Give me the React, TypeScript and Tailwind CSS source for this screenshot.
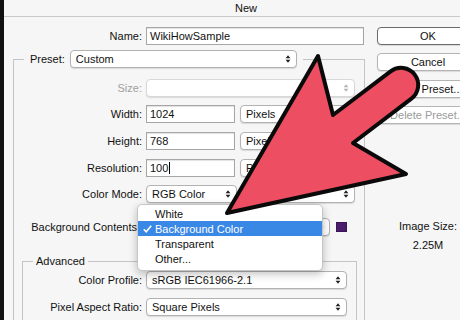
import React from "react";

const UpDown = ({ grey }: { grey?: boolean }) => (
  <svg width="6" height="10" viewBox="0 0 6 10" className="shrink-0">
    <path d="M0.6 4.2 L3 1.2 L5.4 4.2 Z M0.6 5.8 L3 8.8 L5.4 5.8 Z" fill={grey ? "#b5b5b5" : "#222"} />
  </svg>
);

const Select = ({
  className = "",
  children,
  disabled,
}: {
  className?: string;
  children?: React.ReactNode;
  disabled?: boolean;
}) => (
  <div
    className={`h-[18px] flex items-center justify-between rounded-[4px] border bg-white pl-[5px] pr-[5px] shadow-[0_1px_1px_rgba(0,0,0,0.12)] ${
      disabled ? "border-[#d8d8d8]" : "border-[#b2b2b2]"
    } ${className}`}
  >
    <span className="whitespace-nowrap leading-none">{children}</span>
    <UpDown grey={disabled} />
  </div>
);

const Input = ({ className = "", children }: { className?: string; children?: React.ReactNode }) => (
  <div
    className={`h-[18px] flex items-center border border-[#a6a6a6] bg-white px-[3px] shadow-[inset_0_1px_1px_rgba(0,0,0,0.12)] ${className}`}
  >
    {children}
  </div>
);

const Row = ({
  label,
  labelClass,
  className = "",
  grey,
  children,
}: {
  label: string;
  labelClass: string;
  className?: string;
  grey?: boolean;
  children?: React.ReactNode;
}) => (
  <div className={`flex items-center h-[18px] ${className}`}>
    <div className={`shrink-0 text-right whitespace-nowrap ${grey ? "text-[#a0a0a0]" : ""} ${labelClass}`}>
      {label}
    </div>
    {children}
  </div>
);

const Button = ({
  className = "",
  children,
  dark,
  grey,
}: {
  className?: string;
  children: React.ReactNode;
  dark?: boolean;
  grey?: boolean;
}) => (
  <div
    className={`w-full h-[18px] flex items-center justify-center rounded-[4px] border bg-white shadow-[0_1px_1px_rgba(0,0,0,0.12)] ${
      dark ? "border-[#6a6a6a]" : "border-[#b4b4b4]"
    } ${grey ? "text-[#9a9a9a]" : ""} ${className}`}
  >
    {children}
  </div>
);

export default function App() {
  return (
    <div className="w-[460px] h-[320px] relative overflow-hidden flex bg-[#f6f6f6] text-[11px] leading-[14px] text-[#111] font-['Liberation_Sans',Arial,sans-serif]">
      <div className="w-[4px] h-full bg-[#111] shrink-0" />
      <div className="flex-1 flex flex-col min-w-0">
        <div className="h-[17px] shrink-0 border-b border-[#c9c9c9] flex items-center pl-[231px]">New</div>
        <div className="flex flex-1 min-h-0">
          {/* left panel */}
          <div className="w-[373px] shrink-0 flex flex-col">
            <Row label="Name:" labelClass="w-[142px] pr-[4px]" className="mt-[10px]">
              <Input className="w-[218px]">WikiHowSample</Input>
            </Row>

            {/* Preset group */}
            <div className="mt-[14px] ml-[9px] w-[352px] border-l border-t border-r border-[#c4c4c4] pb-[30px] flex flex-col">
              <div className="-mt-[10px] ml-[10px] w-fit px-[6px] bg-[#f6f6f6] flex items-center h-[18px]">
                <span className="pr-[5px]">Preset:</span>
                <Select className="w-[227px]">Custom</Select>
              </div>
              <Row label="Size:" labelClass="w-[132px] pr-[4px]" grey className="mt-[11px]">
                <Select disabled className="w-[209px]" />
              </Row>
              <Row label="Width:" labelClass="w-[132px] pr-[4px]" className="mt-[8px]">
                <Input className="w-[89px]">1024</Input>
                <Select className="w-[115px] ml-[5px]">Pixels</Select>
              </Row>
              <Row label="Height:" labelClass="w-[132px] pr-[4px]" className="mt-[9px]">
                <Input className="w-[89px]">768</Input>
                <Select className="w-[115px] ml-[5px]">Pixels</Select>
              </Row>
              <Row label="Resolution:" labelClass="w-[132px] pr-[4px]" className="mt-[9px]">
                <Input className="w-[89px]">
                  100
                  <span className="inline-block w-[1px] h-[12px] bg-black ml-[1px]" />
                </Input>
                <Select className="w-[115px] ml-[5px]">Pixels/Inch</Select>
              </Row>
              <Row label="Color Mode:" labelClass="w-[132px] pr-[4px]" className="mt-[8px]">
                <Select className="w-[91px]">RGB Color</Select>
                <Select className="w-[114px] ml-[4px]">8 bit</Select>
              </Row>
              <Row label="Background Contents" labelClass="w-[132px] pr-[9px]" className="mt-[15px]">
                <Select className="w-[184px]" />
                <div className="ml-[6px] w-[11px] h-[10px] bg-[#4a1c6c] border border-[#3a1456]" />
              </Row>

              {/* Advanced group */}
              <div className="mt-[25px] ml-[8px] w-[335px] border-l border-t border-r border-[#c4c4c4] pb-[30px] flex flex-col">
                <div className="-mt-[8px] ml-[10px] w-fit px-[3px] h-[14px] bg-[#f6f6f6] flex items-center">Advanced</div>
                <Row label="Color Profile:" labelClass="w-[123px] pr-[4px]" className="mt-[3px]">
                  <Select className="w-[201px]">sRGB IEC61966-2.1</Select>
                </Row>
                <Row label="Pixel Aspect Ratio:" labelClass="w-[123px] pr-[4px]" className="mt-[9px]">
                  <Select className="w-[201px]">Square Pixels</Select>
                </Row>
              </div>
            </div>
          </div>

          {/* right column */}
          <div className="w-[102px] shrink-0 flex flex-col items-center">
            <Button dark className="mt-[10px]">OK</Button>
            <Button className="mt-[8px]">Cancel</Button>
            <Button className="mt-[9px]">Save Preset...</Button>
            <Button grey className="mt-[8px]">Delete Preset...</Button>
            <div className="mt-[95px] h-[14px] whitespace-nowrap">Image Size:</div>
            <div className="mt-[5px] h-[14px]">2.25M</div>
          </div>
        </div>
      </div>

      {/* popup menu */}
      <div className="absolute left-[137px] top-[204px] w-[186px] rounded-[5px] bg-white border border-[#c6c6c6] shadow-[0_3px_8px_rgba(0,0,0,0.25)] pt-[1px] pb-[4px]">
        <div className="h-[15px] flex items-center pl-[17px]">White</div>
        <div className="h-[15px] flex items-center pl-[17px] bg-[#3a88e6] text-white relative">
          <svg width="9" height="8" viewBox="0 0 9 8" className="absolute left-[5px] top-[4px]">
            <path d="M0.8 4.2 L3.2 6.8 L8.2 0.8" stroke="white" strokeWidth="1.6" fill="none" />
          </svg>
          Background Color
        </div>
        <div className="h-[15px] flex items-center pl-[17px]">Transparent</div>
        <div className="h-[15px] flex items-center pl-[17px]">Other...</div>
      </div>

      {/* red arrow */}
      <svg className="absolute left-0 top-0 pointer-events-none" width="460" height="320" viewBox="0 0 460 320">
        <path
          d="M227 213 L318 56 L333 115 L390.6 71.3 A17.2 17.2 0 0 1 411.4 98.7 L353 143 L406 174 Z"
          fill="#ee4e62"
          stroke="#0a0a0a"
          strokeWidth="4"
          strokeLinejoin="round"
        />
      </svg>
    </div>
  );
}
